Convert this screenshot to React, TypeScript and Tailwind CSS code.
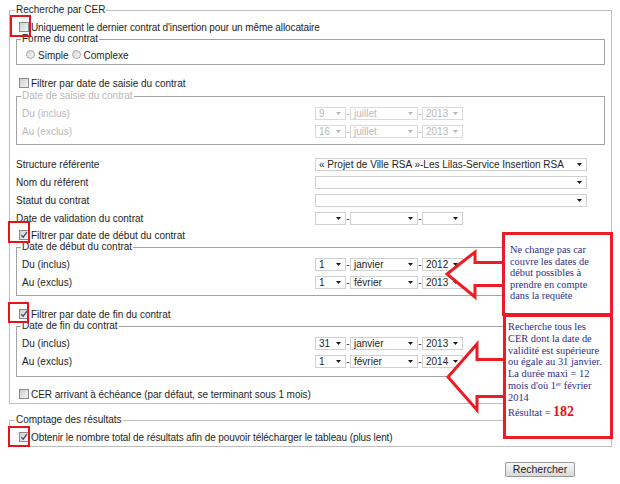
import React from "react";

function Check({ checked }: { checked?: boolean }) {
  return (
    <span className="relative inline-block w-[10px] h-[10px] shrink-0 border border-[#8c8c8c] bg-linear-to-br from-[#cfcfcf] to-[#f5f5f5]">
      {checked && (
        <svg viewBox="0 0 8 8" className="absolute left-0 top-0 w-[8px] h-[8px]">
          <path d="M1.3 4.2 L3.2 6.2 L6.9 1.2" fill="none" stroke="#3c4b70" strokeWidth="1.3" />
        </svg>
      )}
    </span>
  );
}

function Radio() {
  return <span className="inline-block w-[9px] h-[9px] shrink-0 rounded-full border border-[#a5a5a5] bg-linear-to-br from-[#d6d6d6] to-[#f7f7f7]" />;
}

function Sel({ cls, value, disabled }: { cls: string; value?: string; disabled?: boolean }) {
  return (
    <div
      className={
        "relative h-[13px] shrink-0 bg-white border flex items-center pl-[3px] leading-[11px] whitespace-nowrap overflow-hidden " +
        (disabled ? "border-[#dadada] text-[#b9b9b9] " : "border-[#d0d0d0] text-[#1e1e1e] ") +
        cls
      }
    >
      <span>{value ?? ""}</span>
      <svg viewBox="0 0 5 3" className="absolute right-[4px] top-[4.5px] w-[5px] h-[3px]">
        <path d="M0 0 L5 0 L2.5 3 Z" fill={disabled ? "#b5b5b5" : "#1a1a1a"} />
      </svg>
    </div>
  );
}

function Dash({ disabled }: { disabled?: boolean }) {
  return <span className={"w-[4px] shrink-0 text-center leading-[11px] " + (disabled ? "text-[#c0c0c0]" : "text-[#333]")}>-</span>;
}

function DateSel({ d, m, y, disabled }: { d?: string; m?: string; y?: string; disabled?: boolean }) {
  return (
    <div className="flex items-center">
      <Sel cls="w-[31px]" value={d} disabled={disabled} />
      <Dash disabled={disabled} />
      <Sel cls="w-[68px]" value={m} disabled={disabled} />
      <Dash disabled={disabled} />
      <Sel cls="w-[41px]" value={y} disabled={disabled} />
    </div>
  );
}

export default function App() {
  return (
    <div className="relative w-[620px] h-[484px] bg-white overflow-hidden text-[10px] text-[#1e1e1e] font-['Liberation_Sans',Arial,sans-serif]">
      <div className="pt-[4px] pl-[9px]">
        <fieldset className="w-[603px] border border-[#bdbdbd] px-[6px] pb-[2px]">
          <legend className="h-[12px] leading-[12px] -ml-px px-px">Recherche par CER</legend>

          <div className="mt-[6px] h-[11px] flex items-center leading-[11px]">
            <span className="ml-[3px]"><Check /></span>
            <span className="ml-[2px] tracking-[-0.1px]">Uniquement le dernier contrat d'insertion pour un même allocataire</span>
          </div>

          <fieldset className="border border-[#a3a3a3] px-[5px] pb-[2px]">
            <legend className="h-[12px] leading-[12px] -ml-px px-px">Forme du contrat</legend>
            <div className="mt-[5px] h-[12px] flex items-center leading-[12px]">
              <span className="ml-[4px]"><Radio /></span>
              <span className="ml-[3px]">Simple</span>
              <span className="ml-[3px]"><Radio /></span>
              <span className="ml-[3px]">Complexe</span>
            </div>
          </fieldset>

          <div className="mt-[13px] h-[12px] flex items-center leading-[12px]">
            <span className="ml-[3px]"><Check /></span>
            <span className="ml-[2px]">Filtrer par date de saisie du contrat</span>
          </div>

          <fieldset className="border border-[#a3a3a3] px-[5px] pb-[4px] text-[#b9b9b9]">
            <legend className="h-[12px] leading-[12px] -ml-px px-px">Date de saisie du contrat</legend>
            <div className="mt-[2px] h-[18px] flex items-center">
              <span className="w-[293px] shrink-0">Du (inclus)</span>
              <DateSel d="9" m="juillet" y="2013" disabled />
            </div>
            <div className="h-[18px] flex items-center">
              <span className="w-[293px] shrink-0">Au (exclus)</span>
              <DateSel d="16" m="juillet" y="2013" disabled />
            </div>
          </fieldset>

          <div className="mt-[10px]">
            <div className="h-[18px] flex items-center">
              <span className="w-[299px] shrink-0">Structure référente</span>
              <Sel cls="w-[272px]" value="« Projet de Ville RSA »-Les Lilas-Service Insertion RSA" />
            </div>
            <div className="h-[18px] flex items-center">
              <span className="w-[299px] shrink-0">Nom du référent</span>
              <Sel cls="w-[272px]" />
            </div>
            <div className="h-[18px] flex items-center">
              <span className="w-[299px] shrink-0">Statut du contrat</span>
              <Sel cls="w-[272px]" />
            </div>
            <div className="h-[18px] flex items-center">
              <span className="w-[299px] shrink-0">Date de validation du contrat</span>
              <DateSel />
            </div>
          </div>

          <div className="mt-[3px] h-[11px] flex items-center leading-[11px]">
            <span className="ml-[3px]"><Check checked /></span>
            <span className="ml-[2px]">Filtrer par date de début du contrat</span>
          </div>

          <fieldset className="border border-[#a3a3a3] px-[5px] pb-[4px]">
            <legend className="h-[12px] leading-[12px] -ml-px px-px">Date de début du contrat</legend>
            <div className="mt-[2px] h-[18px] flex items-center">
              <span className="w-[293px] shrink-0">Du (inclus)</span>
              <DateSel d="1" m="janvier" y="2012" />
            </div>
            <div className="h-[18px] flex items-center">
              <span className="w-[293px] shrink-0">Au (exclus)</span>
              <DateSel d="1" m="février" y="2013" />
            </div>
          </fieldset>

          <div className="mt-[13px] h-[11px] flex items-center leading-[11px]">
            <span className="ml-[3px]"><Check checked /></span>
            <span className="ml-[2px]">Filtrer par date de fin du contrat</span>
          </div>

          <fieldset className="border border-[#a3a3a3] px-[5px] pb-[6px]">
            <legend className="h-[12px] leading-[12px] -ml-px px-px">Date de fin du contrat</legend>
            <div className="mt-[2px] h-[18px] flex items-center">
              <span className="w-[293px] shrink-0">Du (inclus)</span>
              <DateSel d="31" m="janvier" y="2013" />
            </div>
            <div className="h-[18px] flex items-center">
              <span className="w-[293px] shrink-0">Au (exclus)</span>
              <DateSel d="1" m="février" y="2014" />
            </div>
          </fieldset>

          <div className="mt-[12px] h-[12px] flex items-center leading-[12px]">
            <span className="ml-[3px]"><Check /></span>
            <span className="ml-[2px] tracking-[-0.05px]">CER arrivant à échéance (par défaut, se terminant sous 1 mois)</span>
          </div>
        </fieldset>

        <fieldset className="mt-[10px] w-[603px] border border-[#bdbdbd] px-[6px] pb-[2px]">
          <legend className="h-[12px] leading-[12px] -ml-px px-px">Comptage des résultats</legend>
          <div className="mt-[6px] h-[12px] flex items-center leading-[12px]">
            <span className="ml-[3px]"><Check checked /></span>
            <span className="ml-[2px] tracking-[-0.1px]">Obtenir le nombre total de résultats afin de pouvoir télécharger le tableau (plus lent)</span>
          </div>
        </fieldset>
      </div>

      <div className="pl-[505px] pt-[15px]">
        <button className="w-[70px] h-[15px] border border-[#9a9a9a] rounded-[2px] bg-linear-to-b from-[#f7f7f7] to-[#d9d9d9] text-[10.5px] leading-[13px] text-[#1e1e1e]">
          Rechercher
        </button>
      </div>

      {/* red highlight boxes around checkboxes */}
      <div className="absolute left-[10px] top-[15px] w-[21px] h-[22px] border-2 border-[#e3141b]" />
      <div className="absolute left-[8px] top-[221px] w-[22px] h-[22px] border-2 border-[#e3141b]" />
      <div className="absolute left-[8px] top-[302px] w-[21px] h-[21px] border-2 border-[#e3141b]" />
      <div className="absolute left-[8px] top-[426px] w-[22px] h-[21px] border-2 border-[#e3141b]" />

      {/* arrows */}
      <svg className="absolute left-0 top-0 w-[620px] h-[484px] pointer-events-none" viewBox="0 0 620 484">
        <polygon
          points="506,262.5 475,262.5 475,252 447,274 475,297 475,285.5 506,285.5"
          fill="#ffffff"
          stroke="#ed1c24"
          strokeWidth="3"
        />
        <polygon
          points="507,359.5 477,359.5 477,344 448,377 477,410 477,396.5 507,396.5"
          fill="#ffffff"
          stroke="#ed1c24"
          strokeWidth="3"
        />
      </svg>

      {/* callout boxes */}
      <div className="absolute left-[502px] top-[232px] w-[111px] h-[84px] border-[3px] border-[#ed1c24] bg-white pl-[5px] pt-[9px] font-['Liberation_Serif','Times_New_Roman',serif] text-[10.4px] leading-[11.6px] text-[#2e2e8c]">
        Ne change pas car
        <br />
        couvre les dates de
        <br />
        début possibles à
        <br />
        prendre en compte
        <br />
        dans la requête
      </div>
      <div className="absolute left-[503px] top-[314px] w-[110px] h-[125px] border-[3px] border-[#ed1c24] bg-white pl-[2px] pt-[4px] font-['Liberation_Serif','Times_New_Roman',serif] text-[10.4px] leading-[11.8px] text-[#2e2e8c] whitespace-nowrap">
        Recherche tous les
        <br />
        CER dont la date de
        <br />
        validité est supérieure
        <br />
        ou égale au 31 janvier.
        <br />
        La durée maxi = 12
        <br />
        mois d'où 1<span className="relative -top-[3px] text-[6.5px] leading-none">er</span> février
        <br />
        2014
        <div className="leading-[15px]">
          Résultat = <span className="text-[14px] font-bold text-[#e3141b]">182</span>
        </div>
      </div>
    </div>
  );
}
